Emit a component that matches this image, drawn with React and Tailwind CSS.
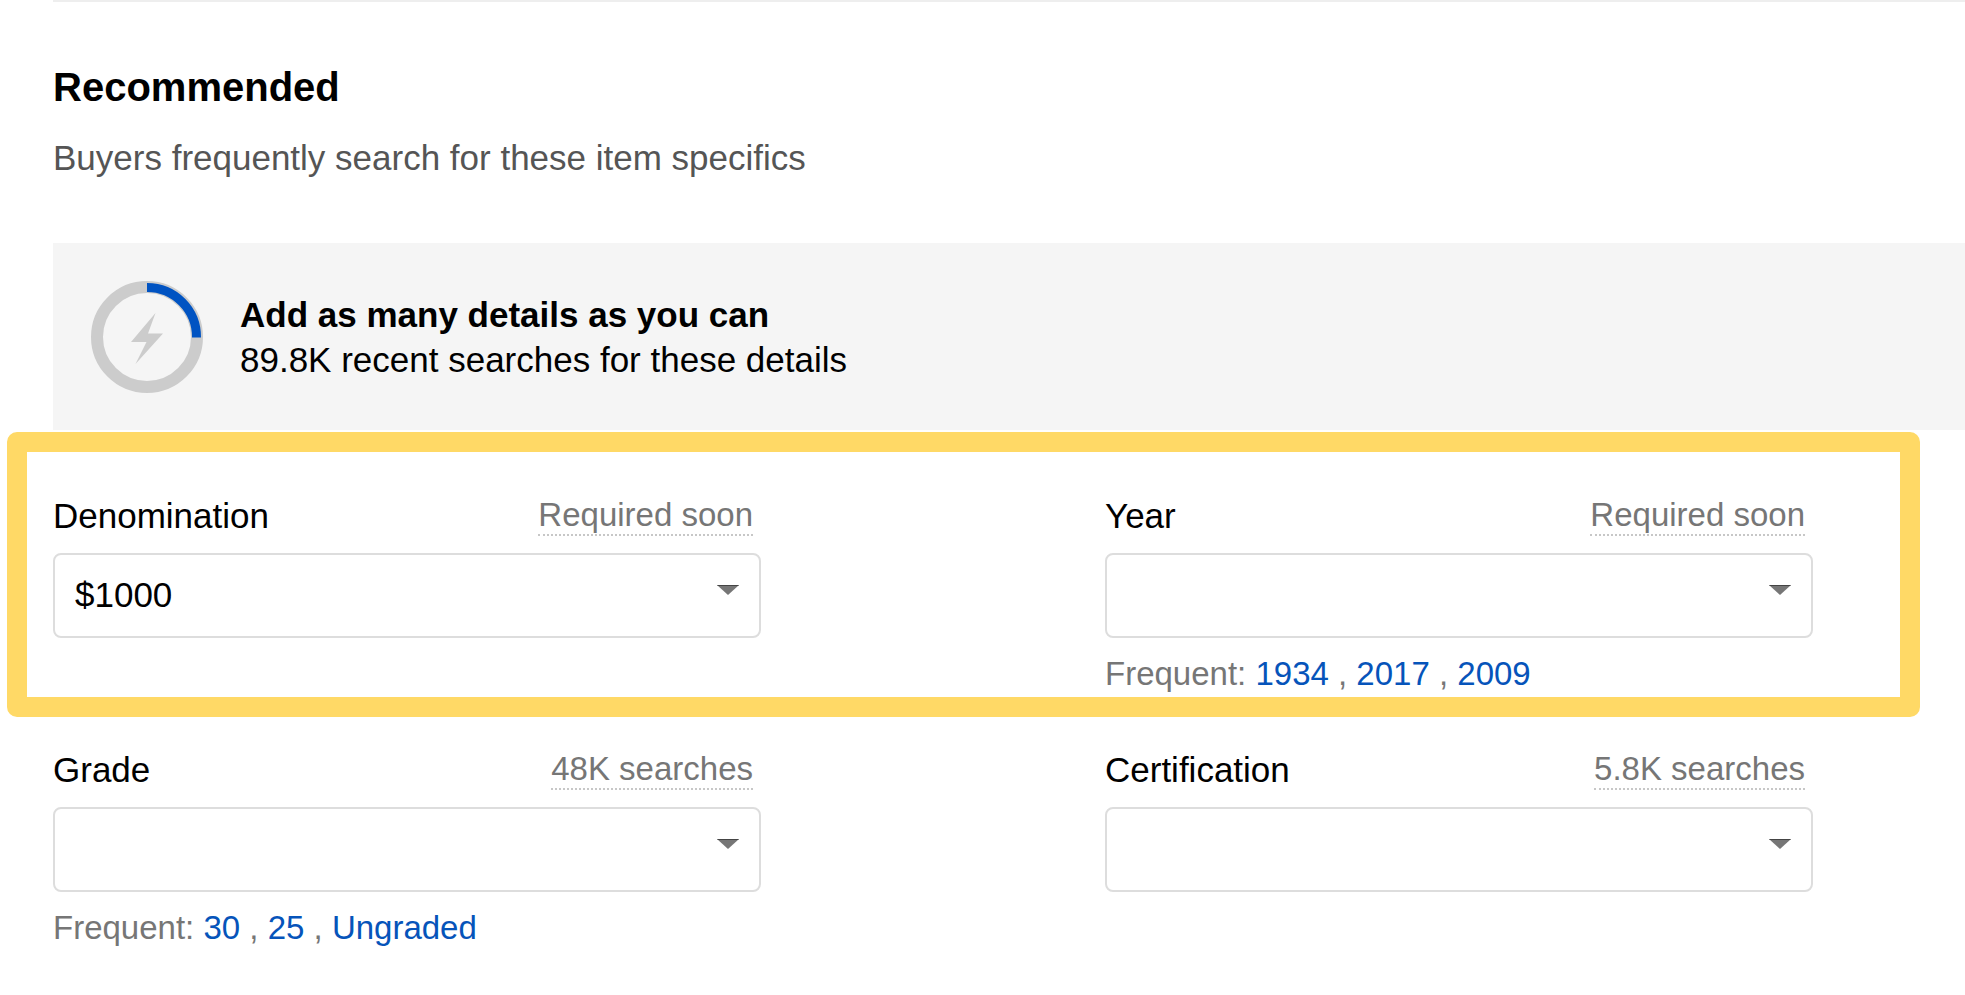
import { useState } from "react";

const requiredFields = [
  {
    id: "denomination",
    label: "Denomination",
    hint: "Required soon",
    value: "$1000",
    options: ["$1000", "$500", "$100"],
    frequent: [],
  },
  {
    id: "year",
    label: "Year",
    hint: "Required soon",
    value: "",
    options: ["1934", "2017", "2009"],
    frequent: ["1934", "2017", "2009"],
  },
];

const optionalFields = [
  {
    id: "grade",
    label: "Grade",
    hint: "48K searches",
    value: "",
    options: ["30", "25", "Ungraded"],
    frequent: ["30", "25", "Ungraded"],
  },
  {
    id: "certification",
    label: "Certification",
    hint: "5.8K searches",
    value: "",
    options: ["PMG", "PCGS", "Uncertified"],
    frequent: [],
  },
];

function ProgressRing() {
  return (
    <svg viewBox="0 0 112 112" className="w-28 h-28 shrink-0" aria-hidden="true">
      <circle cx="56" cy="56" r="50" fill="none" stroke="#cccccc" strokeWidth="12" />
      {/* first quarter done */}
      <path d="M56 6.5A49.5 49.5 0 0 1 105.5 56.5" fill="none" stroke="#0053c2" strokeWidth="9" />
      <path d="M64.500 32 57 52.500H72L44.500 83 55.500 61H40Z" fill="#cccccc" />
    </svg>
  );
}

function Field({ field }) {
  const [value, setValue] = useState(field.value);

  return (
    <div>
      <div className="flex items-center justify-between pr-2 mb-[15px]">
        <label htmlFor={field.id} className="text-[35px] leading-[44px] text-black">
          {field.label}
        </label>
        <button
          type="button"
          className="text-[33px] leading-[38px] text-[#767676] border-b-2 border-dotted border-[#c7c7c7]"
        >
          {field.hint}
        </button>
      </div>
      <div className="relative">
        <select
          id={field.id}
          value={value}
          onChange={(e) => setValue(e.target.value)}
          className="block appearance-none w-full h-[85px] pl-5 pr-16 text-[35px] text-black bg-white border-2 border-[#dddddd] rounded-lg"
        >
          <option value=""></option>
          {field.options.map((option) => (
            <option key={option} value={option}>
              {option}
            </option>
          ))}
        </select>
        <svg
          viewBox="0 0 22 10"
          className="absolute top-8 right-[22px] w-[22px] h-[10px] pointer-events-none"
          aria-hidden="true"
        >
          <path d="M0 0H22L11 10Z" fill="#767676" />
          <path d="M0 0H22L21 1H1Z" fill="#444444" />
        </svg>
      </div>
      {field.frequent.length > 0 && (
        <p className="mt-4 text-[33px] leading-[40px] text-[#767676]">
          Frequent:{" "}
          {field.frequent.map((item, i) => (
            <span key={item}>
              {i > 0 && " , "}
              <a
                href="#"
                onClick={(e) => {
                  e.preventDefault();
                  setValue(item);
                }}
                className="text-[#0654ba] hover:underline"
              >
                {item}
              </a>
            </span>
          ))}
        </p>
      )}
    </div>
  );
}

export default function App() {
  return (
    <main className="min-h-screen bg-white pl-[53px] font-['Liberation_Sans',Arial,sans-serif]">
      <header className="border-t-2 border-[#eeeeee] pt-[61px]">
        <h2 className="text-[40px] leading-[48px] font-bold text-black">Recommended</h2>
        <p className="mt-[25px] text-[35px] leading-[44px] text-[#555555]">
          Buyers frequently search for these item specifics
        </p>
      </header>

      <section className="mt-[63px] flex items-center gap-[37px] bg-[#f5f5f5] pl-[38px] pt-[38px] pb-[37px]">
        <ProgressRing />
        <div className="text-[35px] leading-[45px] text-black">
          <p className="font-bold">Add as many details as you can</p>
          <p>89.8K recent searches for these details</p>
        </div>
      </section>

      <form className="mt-16 mr-[152px] flex flex-col gap-[54px]">
        <div className="relative grid grid-cols-2 gap-x-[344px]">
          {requiredFields.map((field) => (
            <Field key={field.id} field={field} />
          ))}
          {/* highlight frame drawn over the required row */}
          <div className="absolute -top-[62px] -bottom-[23px] -left-[46px] -right-[107px] border-[20px] border-[#ffd966] rounded-[10px] pointer-events-none" />
        </div>
        <div className="grid grid-cols-2 gap-x-[344px]">
          {optionalFields.map((field) => (
            <Field key={field.id} field={field} />
          ))}
        </div>
      </form>
    </main>
  );
}
